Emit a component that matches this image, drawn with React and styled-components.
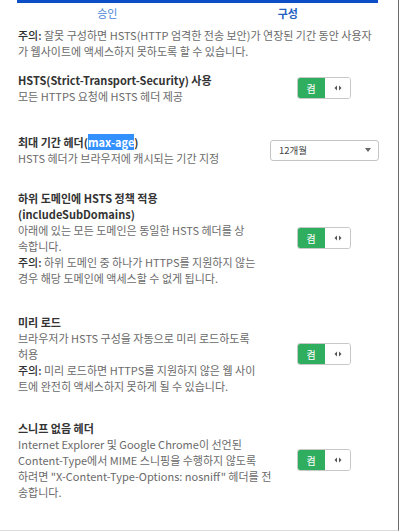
import React from "react";
import styled, { createGlobalStyle } from "styled-components";

const Global = createGlobalStyle`
  html, body { margin: 0; padding: 0; background: #fff; }
  body { font-family: "Noto Sans CJK KR", "Noto Sans", sans-serif; }
`;

const Frame = styled.div`
  width: 360px;
  height: 530px;
  border-right: 1px solid #6a6a6a;
  border-bottom: 1px solid #dcdcdc;
  overflow: hidden;
  display: flex;
  flex-direction: column;
  padding: 0 20px 0 18px;
  box-sizing: content-box;
`;

const TabBar = styled.div`
  display: grid;
  grid-template-columns: 1fr 1fr;
  margin-left: -1px;
  border-top: 3px solid #0b4fc6;
`;

const Tab = styled.div`
  height: 19px;
  display: flex;
  align-items: center;
  justify-content: center;
  font-size: 11px;
  color: ${(p) => (p.$active ? "#1f5fbf" : "#4a86d8")};
  font-weight: ${(p) => (p.$active ? 700 : 400)};
`;

const Warning = styled.p`
  margin: 5px 0 0;
  font-size: 11px;
  line-height: 16px;
  color: #6a6a6a;
  white-space: nowrap;
`;

const Strong = styled.b`
  color: #2e2e2e;
  font-weight: 500;
`;

const Row = styled.div`
  display: grid;
  grid-template-columns: 252px 1fr;
  align-items: center;
  margin-top: ${(p) => p.$top}px;
`;

const TextCol = styled.div`
  font-size: 11px;
  line-height: 16px;
  white-space: nowrap;
`;

const Title = styled.div`
  font-weight: 700;
  color: #333;
`;

const Desc = styled.div`
  color: #6a6a6a;
`;

const Highlight = styled.span`
  background: #3390ff;
  color: #fff;
`;

const Control = styled.div`
  display: flex;
  justify-content: center;
`;

const Toggle = styled.div`
  display: flex;
  width: 54px;
  height: 22px;
  border-radius: 3px;
  overflow: hidden;
  border: 1px solid #c8c8c8;
  box-sizing: border-box;
`;

const ToggleOn = styled.div`
  width: 28px;
  background: #2fae5f;
  color: #fff;
  font-size: 10px;
  display: flex;
  align-items: center;
  justify-content: center;
  margin: -1px 0 -1px -1px;
`;

const ToggleOff = styled.div`
  flex: 1;
  display: flex;
  align-items: center;
  justify-content: center;
  background: #fff;
`;

const Select = styled.div`
  width: 109px;
  height: 21px;
  box-sizing: border-box;
  border: 1px solid #c4c4c4;
  border-radius: 3px;
  display: flex;
  align-items: center;
  justify-content: space-between;
  padding: 0 7px 0 8px;
  font-size: 9.5px;
  color: #444;
`;

const Arrows = () => (
  <svg width="8" height="6" viewBox="0 0 8 6">
    <path d="M3 0.5 L0.5 3 L3 5.5 Z" fill="#555" />
    <path d="M5 0.5 L7.5 3 L5 5.5 Z" fill="#555" />
  </svg>
);

const Caret = () => (
  <svg width="6" height="4" viewBox="0 0 6 4">
    <path d="M0 0 H6 L3 4 Z" fill="#666" />
  </svg>
);

const Switch = () => (
  <Control>
    <Toggle>
      <ToggleOn>켬</ToggleOn>
      <ToggleOff>
        <Arrows />
      </ToggleOff>
    </Toggle>
  </Control>
);

export default function App() {
  return (
    <>
      <Global />
      <Frame>
        <TabBar>
          <Tab>승인</Tab>
          <Tab $active>구성</Tab>
        </TabBar>
        <Warning>
          <Strong>주의:</Strong> 잘못 구성하면 HSTS(HTTP 엄격한 전송 보안)가 연장된 기간 동안 사용자
          <br />가 웹사이트에 액세스하지 못하도록 할 수 있습니다.
        </Warning>

        <Row $top={13}>
          <TextCol>
            <Title>HSTS(Strict-Transport-Security) 사용</Title>
            <Desc>모든 HTTPS 요청에 HSTS 헤더 제공</Desc>
          </TextCol>
          <Switch />
        </Row>

        <Row $top={30}>
          <TextCol>
            <Title>
              최대 기간 헤더(<Highlight>max-age</Highlight>)
            </Title>
            <Desc>HSTS 헤더가 브라우저에 캐시되는 기간 지정</Desc>
          </TextCol>
          <Control>
            <Select>
              <span>12개월</span>
              <Caret />
            </Select>
          </Control>
        </Row>

        <Row $top={24}>
          <TextCol>
            <Title>
              하위 도메인에 HSTS 정책 적용
              <br />
              (includeSubDomains)
            </Title>
            <Desc>
              아래에 있는 모든 도메인은 동일한 HSTS 헤더를 상
              <br />
              속합니다.
              <br />
              <Strong>주의:</Strong> 하위 도메인 중 하나가 HTTPS를 지원하지 않는
              <br />
              경우 해당 도메인에 액세스할 수 없게 됩니다.
            </Desc>
          </TextCol>
          <Switch />
        </Row>

        <Row $top={28}>
          <TextCol>
            <Title>미리 로드</Title>
            <Desc>
              브라우저가 HSTS 구성을 자동으로 미리 로드하도록
              <br />
              허용
              <br />
              <Strong>주의:</Strong> 미리 로드하면 HTTPS를 지원하지 않은 웹 사이
              <br />
              트에 완전히 액세스하지 못하게 될 수 있습니다.
            </Desc>
          </TextCol>
          <Switch />
        </Row>

        <Row $top={26}>
          <TextCol>
            <Title>스니프 없음 헤더</Title>
            <Desc>
              Internet Explorer 및 Google Chrome이 선언된
              <br />
              Content-Type에서 MIME 스니핑을 수행하지 않도록
              <br />
              하려면 "X-Content-Type-Options: nosniff" 헤더를 전
              <br />
              송합니다.
            </Desc>
          </TextCol>
          <Switch />
        </Row>
      </Frame>
    </>
  );
}
